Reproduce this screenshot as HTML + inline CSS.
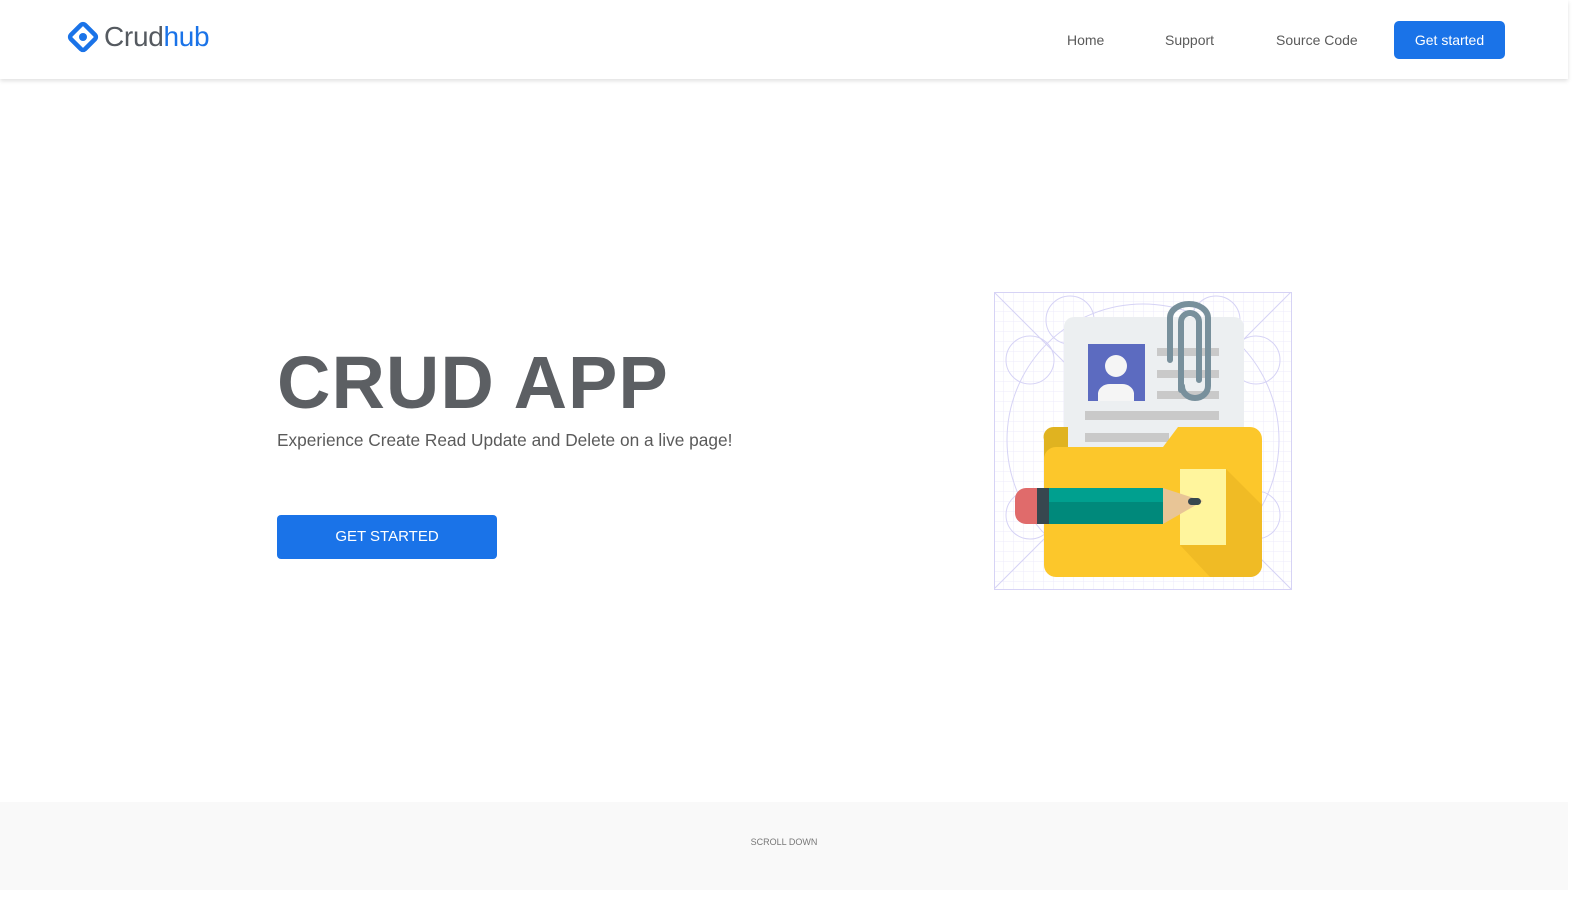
<!DOCTYPE html>
<html><head><meta charset="utf-8"><style>
*{margin:0;padding:0;box-sizing:border-box}
body{width:1583px;height:900px;overflow:hidden;background:#fff;font-family:"Liberation Sans",sans-serif;position:relative}
.nav{position:absolute;left:0;top:0;width:1568px;height:79px;background:#fff;box-shadow:0 2px 4px rgba(0,0,0,.12)}
.logo{position:absolute;left:66px;top:20px;display:flex;align-items:center}
.logo span{font-size:28px;color:#555a60;margin-left:4px;letter-spacing:-.3px}
.logo b{font-weight:normal;color:#1a73e8}
.nl{position:absolute;top:32px;font-size:14px;color:#5a5a5a}
.btn{position:absolute;left:1394px;top:21px;width:111px;height:38px;background:#1a73e8;border-radius:5px;color:#fff;font-size:14px;text-align:center;line-height:38px}
h1{position:absolute;left:277px;top:340px;font-size:74px;font-weight:bold;color:#5c5f63;letter-spacing:1px}
.sub{position:absolute;left:277px;top:430px;font-size:17.3px;color:#5a5a5a}
.cta{position:absolute;left:277px;top:515px;width:220px;height:44px;background:#1a73e8;border-radius:4px;color:#fff;font-size:15px;text-align:center;line-height:44px}
.foot{position:absolute;left:0;top:802px;width:1568px;height:88px;background:#f9f9f9;text-align:center;font-size:9px;color:#777;padding-top:35px}
svg.ill{position:absolute;left:994px;top:292px}
</style></head><body>
<div class="nav">
 <div class="logo"><svg width="34" height="34" viewBox="0 0 34 34"><rect x="7" y="7" width="20" height="20" rx="3" transform="rotate(45 17 17)" fill="none" stroke="#1a73e8" stroke-width="4.5"/><circle cx="17" cy="17" r="4" fill="#1a73e8"/></svg><span>Crud<b>hub</b></span></div>
 <div class="nl" style="left:1067px">Home</div>
 <div class="nl" style="left:1165px">Support</div>
 <div class="nl" style="left:1276px">Source Code</div>
 <div class="btn">Get started</div>
</div>
<h1>CRUD APP</h1>
<div class="sub">Experience Create Read Update and Delete on a live page!</div>
<div class="cta">GET STARTED</div>
<svg class="ill" width="298" height="298" viewBox="994 292 298 298">
 <defs><pattern id="g" x="994" y="292" width="10" height="10" patternUnits="userSpaceOnUse"><path d="M10 0V10H0" fill="none" stroke="#ecebfb" stroke-width="1"/></pattern></defs>
 <rect x="994.5" y="292.5" width="297" height="297" fill="url(#g)" stroke="#d6d3f5"/>
 <g fill="none" stroke="#d6d3f5">
  <path d="M994 292L1291 589M1291 292L994 589"/>
  <circle cx="1143" cy="440" r="136"/>
  <circle cx="1030" cy="360" r="24"/><circle cx="1256" cy="360" r="24"/><circle cx="1030" cy="515" r="24"/><circle cx="1256" cy="515" r="24"/>
  <circle cx="1070" cy="320" r="24"/><circle cx="1216" cy="320" r="24"/>
 </g>
 <rect x="1064" y="317" width="180" height="150" rx="10" fill="#eceff1"/>
 <rect x="1088" y="344" width="57" height="57" fill="#5c6bc0"/>
 <circle cx="1116" cy="366" r="11" fill="#f5f5f5"/>
 <path d="M1098 401v-8a12 10 0 0 1 12-9h12a12 10 0 0 1 12 9v8z" fill="#f5f5f5"/>
 <g fill="#c9c9c9"><rect x="1157" y="348" width="62" height="8"/><rect x="1157" y="370" width="62" height="8"/><rect x="1157" y="391" width="62" height="8"/><rect x="1085" y="411" width="134" height="9"/><rect x="1085" y="433" width="84" height="9"/></g>
 <path d="M1181 390V322a9 9 0 0 1 18 0v58" fill="none" stroke="#78909c" stroke-width="6" stroke-linecap="round"/>
 <path d="M1170 360V318a19 14 0 0 1 38 0v68a13 12 0 0 1-26 0" fill="none" stroke="#78909c" stroke-width="6" stroke-linecap="round"/>
 <path d="M1044 440a10 10 0 0 1 10-13h14v40h-24z" fill="#e0b320"/>
 <path d="M1044 460a12 12 0 0 1 12-13h107l15-20h72a12 12 0 0 1 12 12v126a12 12 0 0 1-12 12h-194a12 12 0 0 1-12-12z" fill="#fcc72b"/>
 <path d="M1226 469L1262 505V565a12 12 0 0 1-12 12h-40l-30-32z" fill="#f0bb25"/>
 <rect x="1180" y="469" width="46" height="76" fill="#fff59d"/>
 <path d="M1026 488h11v36h-11a11 11 0 0 1-11-11v-14a11 11 0 0 1 11-11z" fill="#e06b6b"/>
 <rect x="1037" y="488" width="12" height="36" fill="#37474f"/>
 <rect x="1049" y="488" width="114" height="36" fill="#00897b"/>
 <rect x="1049" y="488" width="114" height="14" fill="#00a08f"/>
 <path d="M1163 488L1203 501L1163 524z" fill="#e8c596"/>
 <rect x="1188" y="498" width="13" height="7" rx="3.5" fill="#37474f"/>
</svg>
<div class="foot">SCROLL DOWN</div>
</body></html>
